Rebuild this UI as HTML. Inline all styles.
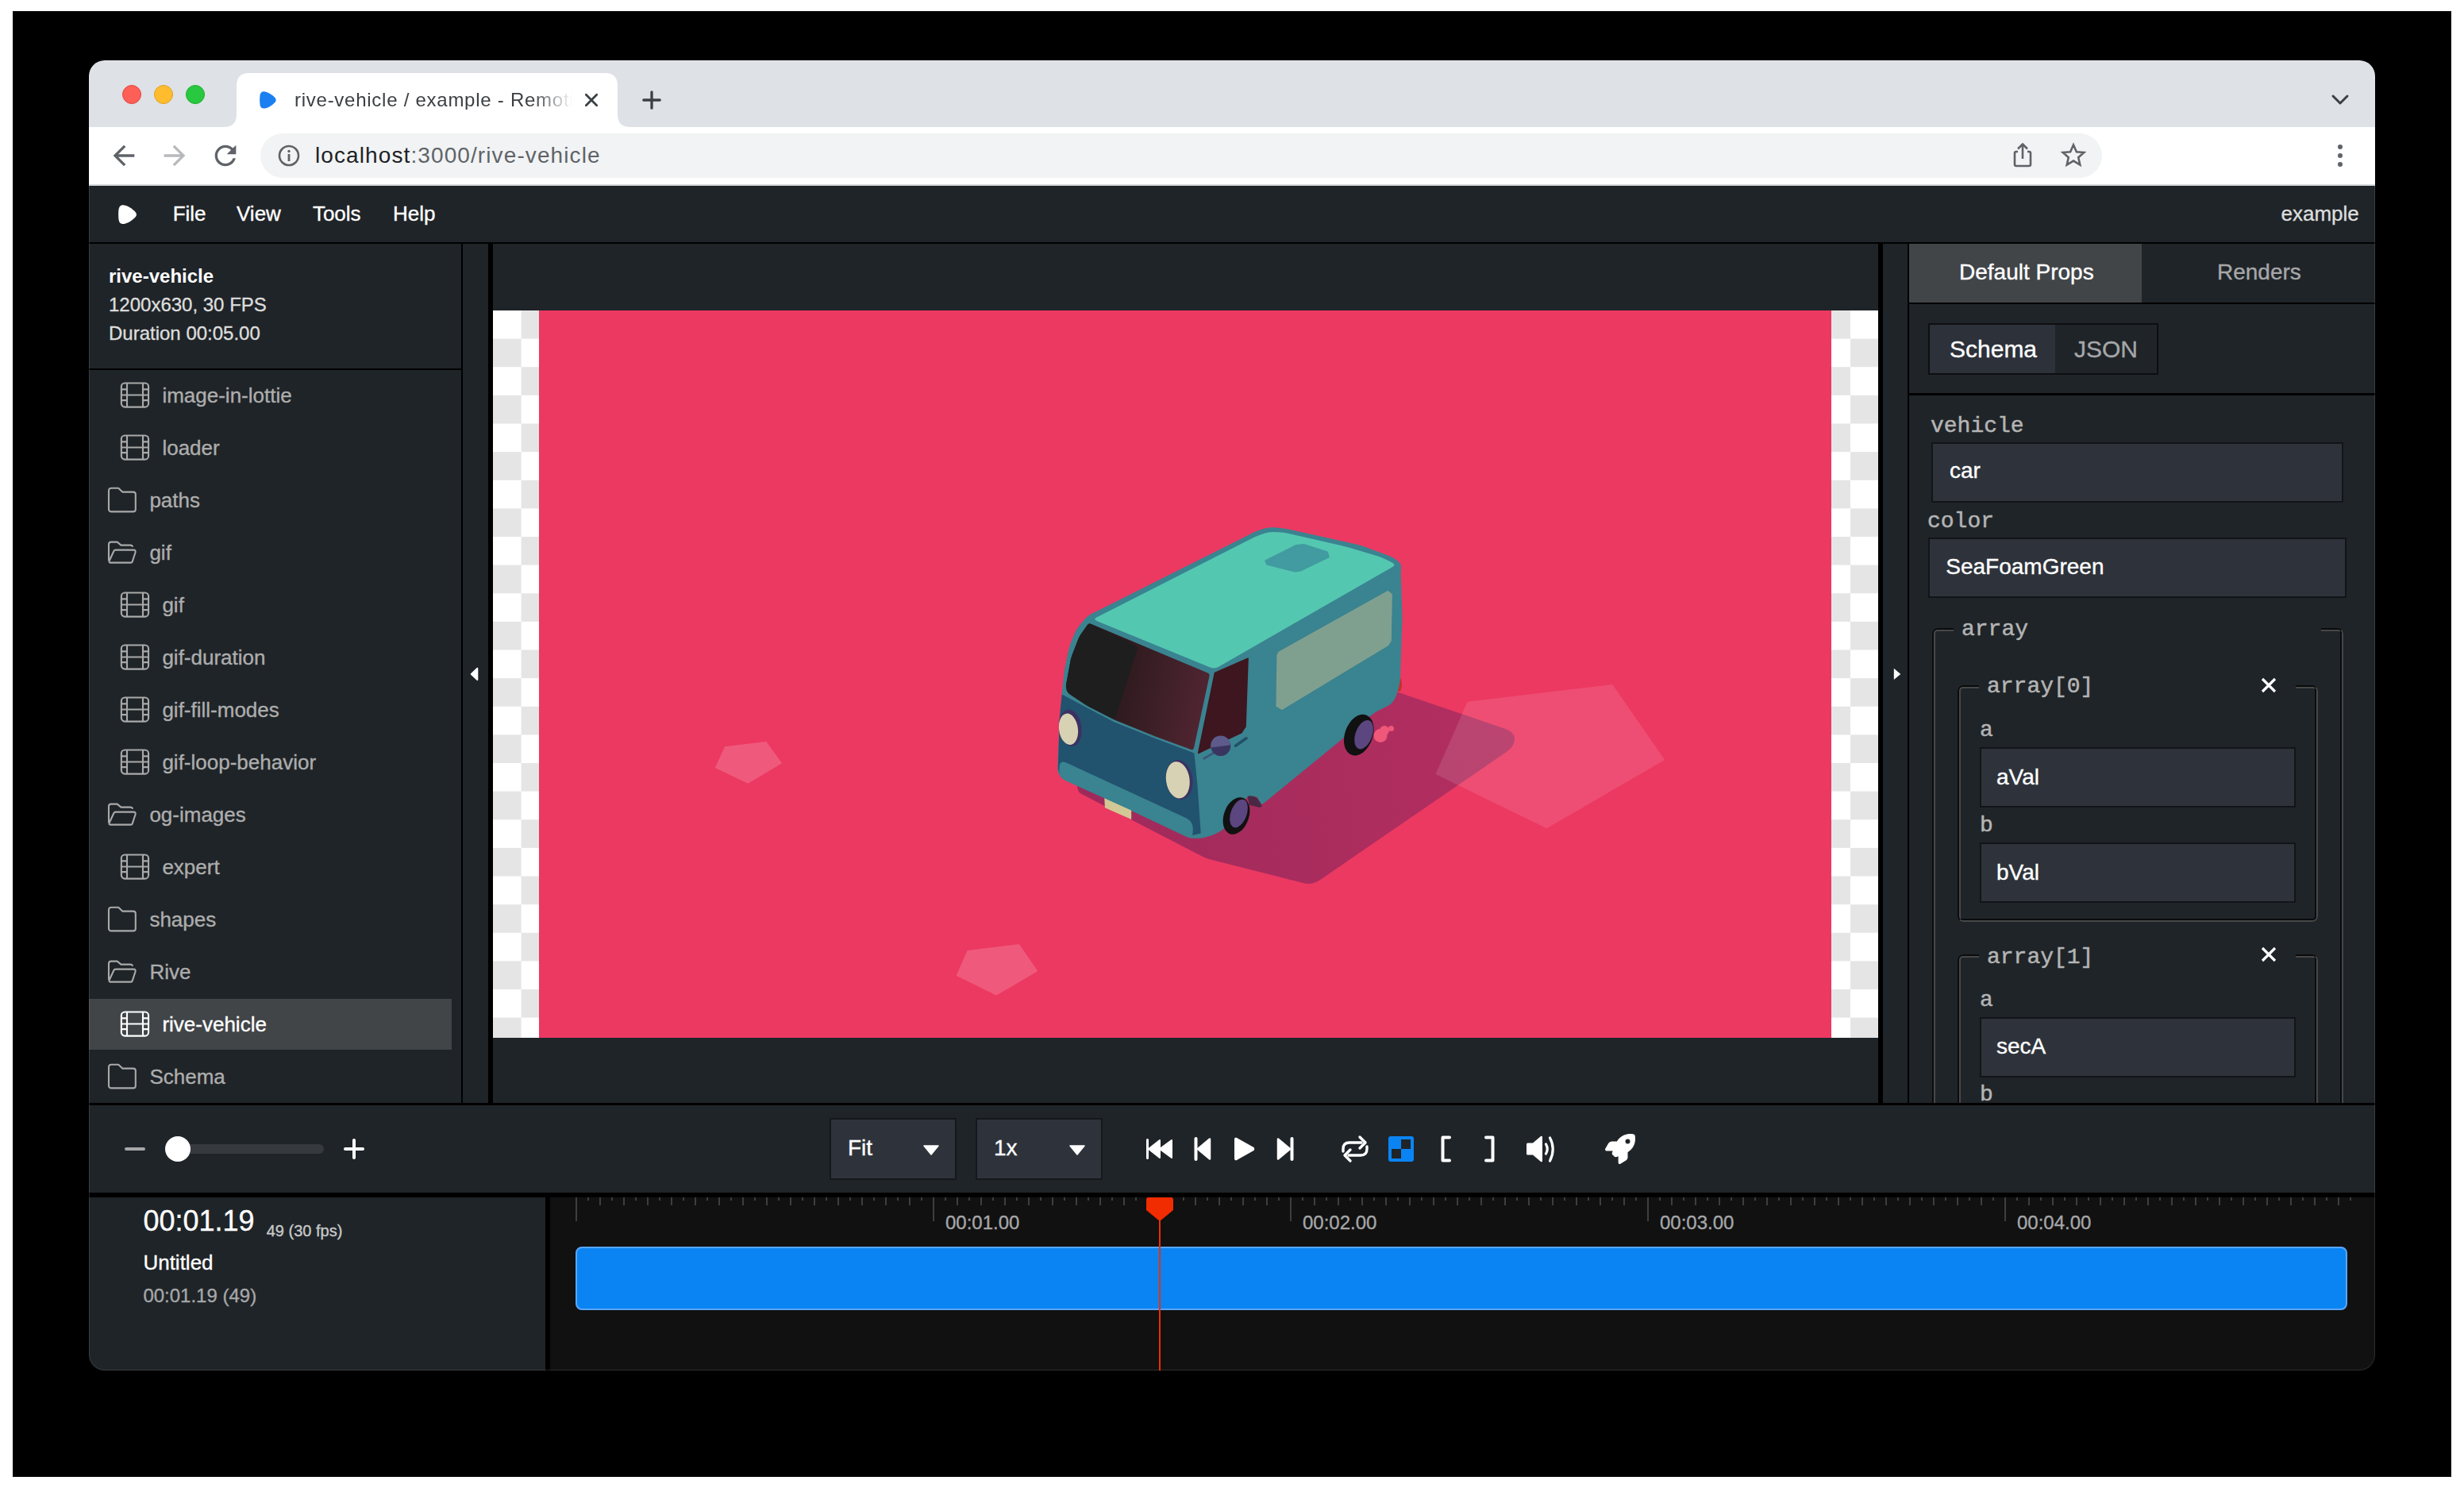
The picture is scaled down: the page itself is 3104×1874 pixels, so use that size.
<!DOCTYPE html>
<html><head><meta charset="utf-8">
<style>
*{box-sizing:border-box;margin:0;padding:0}
html,body{width:3104px;height:1874px;overflow:hidden;background:#fff}
body{position:relative;font-family:"Liberation Sans",sans-serif}
.a{position:absolute}
#frame{left:16px;top:14px;width:3072px;height:1846px;background:#000}
#win{left:0;top:0;width:3104px;height:1874px;clip-path:inset(76px 112px 148px 112px round 20px)}
.t{position:absolute;white-space:nowrap;line-height:1}
</style></head>
<body>
<div id="frame" class="a"></div>
<div id="win" class="a">
  <!-- tab strip -->
  <div class="a" style="left:112px;top:76px;width:2880px;height:84px;background:#dee1e6"></div>
  <!-- toolbar -->
  <div class="a" style="left:112px;top:160px;width:2880px;height:72px;background:#fff"></div>
  <div class="a" style="left:112px;top:232px;width:2880px;height:2px;background:#d7d9dc"></div>
  <!-- traffic lights -->
  <div class="a" style="left:154px;top:107px;width:24px;height:24px;border-radius:50%;background:#fe5f57;border:1px solid #e14640"></div>
  <div class="a" style="left:194px;top:107px;width:24px;height:24px;border-radius:50%;background:#febc2e;border:1px solid #dfa123"></div>
  <div class="a" style="left:234px;top:107px;width:24px;height:24px;border-radius:50%;background:#28c840;border:1px solid #1dad2b"></div>

  <!-- tab -->
  <svg class="a" style="left:282px;top:92px" width="512" height="68" viewBox="0 0 512 68"><path d="M0,68 Q16,68 16,52 L16,16 Q16,0 32,0 L480,0 Q496,0 496,16 L496,52 Q496,68 512,68 Z" fill="#fff"/></svg>
  <svg class="a" style="left:327.2px;top:114.9px" width="21.1" height="21.9" viewBox="0 0 24 24" preserveAspectRatio="none"><path d="M6,0.3 C11,0.3 18,4.5 22.5,9.3 C23.8,10.8 23.8,13.2 22.5,14.7 C18,19.5 11,23.7 6,23.7 C2.6,23.7 1,21.5 0.5,18 C0,14 0,10 0.5,6 C1,2.5 2.6,0.3 6,0.3 Z" fill="#1a7ff0"/></svg>
  <div class="t" id="tabtitle" style="left:371px;top:114px;font-size:24px;letter-spacing:0.74px;color:#3c4043;width:352px;overflow:hidden;-webkit-mask-image:linear-gradient(90deg,#000 300px,transparent 350px)">rive-vehicle / example - Remotion Studio</div>
  <svg class="a" style="left:733px;top:114px" width="24" height="24" viewBox="0 0 24 24"><path d="M5.3,5.3 L18.7,18.7 M18.7,5.3 L5.3,18.7" stroke="#3c4043" stroke-width="2.8" stroke-linecap="round"/></svg>
  <svg class="a" style="left:807px;top:112px" width="28" height="28" viewBox="0 0 28 28"><path d="M14,3.8 L14,24.2 M3.8,14 L24.2,14" stroke="#3c4043" stroke-width="3.3" stroke-linecap="round"/></svg>
  <svg class="a" style="left:2934px;top:116px" width="28" height="20" viewBox="0 0 28 20"><path d="M5,5 L14,14 L23,5" stroke="#3c4043" stroke-width="3" fill="none" stroke-linecap="round" stroke-linejoin="round"/></svg>
  <!-- nav icons -->
  <svg class="a" style="left:136px;top:176px" width="40" height="40" viewBox="0 0 24 24"><path d="M20 11H7.83l5.59-5.59L12 4l-8 8 8 8 1.41-1.41L7.83 13H20v-2z" fill="#5f6368"/></svg>
  <svg class="a" style="left:200px;top:176px" width="40" height="40" viewBox="0 0 24 24"><path d="M4 11h12.17l-5.59-5.59L12 4l8 8-8 8-1.41-1.41L16.17 13H4v-2z" fill="#b7b9bc"/></svg>
  <svg class="a" style="left:264px;top:176px" width="40" height="40" viewBox="0 0 24 24"><path d="M17.65 6.35C16.2 4.9 14.21 4 12 4c-4.42 0-7.99 3.58-7.99 8s3.57 8 7.99 8c3.73 0 6.84-2.55 7.73-6h-2.08c-.82 2.33-3.04 4-5.65 4-3.31 0-6-2.69-6-6s2.69-6 6-6c1.66 0 3.14.69 4.22 1.78L13 11h7V4l-2.35 2.35z" fill="#5f6368"/></svg>
  <!-- address bar -->
  <div class="a" style="left:328px;top:168px;width:2320px;height:56px;border-radius:28px;background:#f1f3f4"></div>
  <svg class="a" style="left:348px;top:180px" width="32" height="32" viewBox="0 0 32 32"><circle cx="16" cy="16" r="12" fill="none" stroke="#5f6368" stroke-width="2.6"/><rect x="14.6" y="14" width="2.8" height="9" fill="#5f6368"/><circle cx="16" cy="10.5" r="1.7" fill="#5f6368"/></svg>
  <div class="t" id="url" style="left:397px;top:182px;font-size:28px;letter-spacing:1.1px;color:#202124">localhost<span style="color:#5f6368">:3000/rive-vehicle</span></div>
  <svg class="a" style="left:2530px;top:178px" width="36" height="36" viewBox="0 0 36 36"><path d="M12,13 L10,13 Q8,13 8,15 L8,29 Q8,31 10,31 L26,31 Q28,31 28,29 L28,15 Q28,13 26,13 L24,13" fill="none" stroke="#5f6368" stroke-width="2.6"/><path d="M18,22 L18,4 M12,9.5 L18,3.5 L24,9.5" fill="none" stroke="#5f6368" stroke-width="2.6" stroke-linejoin="round"/></svg>
  <svg class="a" style="left:2594px;top:178px" width="36" height="36" viewBox="0 0 36 36"><path d="M18,4.5 L21.9,13.2 L31.3,14 L24.2,20.3 L26.3,29.6 L18,24.6 L9.7,29.6 L11.8,20.3 L4.7,14 L14.1,13.2 Z" fill="none" stroke="#5f6368" stroke-width="2.6" stroke-linejoin="miter"/></svg>
  <svg class="a" style="left:2932px;top:176px" width="32" height="40" viewBox="0 0 32 40"><circle cx="16" cy="9" r="3" fill="#5f6368"/><circle cx="16" cy="20" r="3" fill="#5f6368"/><circle cx="16" cy="31" r="3" fill="#5f6368"/></svg>


<div class="a" style="left:112px;top:234px;width:2880px;height:1492px;background:#1f2428;"></div>
<div class="a" style="left:112px;top:305px;width:2880px;height:2px;background:#000;"></div>
<svg class="a" style="left:148.9px;top:257.8px" width="23.4" height="24.3" viewBox="0 0 24 24" preserveAspectRatio="none"><path d="M6,0.3 C11,0.3 18,4.5 22.5,9.3 C23.8,10.8 23.8,13.2 22.5,14.7 C18,19.5 11,23.7 6,23.7 C2.6,23.7 1,21.5 0.5,18 C0,14 0,10 0.5,6 C1,2.5 2.6,0.3 6,0.3 Z" fill="#fff"/></svg>
<div class="t" style="left:217.7px;top:256.09px;font-size:26px;color:#fff;font-weight:400;font-family:'Liberation Sans',sans-serif;-webkit-text-stroke:0.35px #fff;">File</div>
<div class="t" style="left:298px;top:256.09px;font-size:26px;color:#fff;font-weight:400;font-family:'Liberation Sans',sans-serif;-webkit-text-stroke:0.35px #fff;">View</div>
<div class="t" style="left:393.9px;top:256.09px;font-size:26px;color:#fff;font-weight:400;font-family:'Liberation Sans',sans-serif;-webkit-text-stroke:0.35px #fff;">Tools</div>
<div class="t" style="left:495px;top:256.09px;font-size:26px;color:#fff;font-weight:400;font-family:'Liberation Sans',sans-serif;-webkit-text-stroke:0.35px #fff;">Help</div>
<div class="t" style="left:2873.5px;top:256.09px;font-size:26px;color:#ddd;font-weight:400;font-family:'Liberation Sans',sans-serif;-webkit-text-stroke:0.35px #ddd;">example</div>
<div class="a" style="left:581px;top:307px;width:2px;height:1082px;background:#000;"></div>
<div class="a" style="left:615px;top:307px;width:6px;height:1082px;background:#000;"></div>
<div class="a" style="left:2366px;top:307px;width:6px;height:1082px;background:#000;"></div>
<div class="a" style="left:2403px;top:307px;width:2px;height:1082px;background:#000;"></div>
<div class="t" style="left:137px;top:336.38px;font-size:24px;color:#fff;font-weight:700;font-family:'Liberation Sans',sans-serif;">rive-vehicle</div>
<div class="t" style="left:137px;top:372.08px;font-size:24px;color:#ddd;font-weight:400;font-family:'Liberation Sans',sans-serif;-webkit-text-stroke:0.35px #ddd;">1200x630, 30 FPS</div>
<div class="t" style="left:137px;top:408.28px;font-size:24px;color:#ddd;font-weight:400;font-family:'Liberation Sans',sans-serif;-webkit-text-stroke:0.35px #ddd;">Duration 00:05.00</div>
<div class="a" style="left:112px;top:464px;width:469px;height:2px;background:#000;"></div>
<svg class="a" style="left:151px;top:480.4px" width="40" height="36" viewBox="0 0 40 36"><g fill="none" stroke="#a9a9a9" stroke-width="2.1"><rect x="1.85" y="2.45" width="34.2" height="30.2" rx="4.4"/><path d="M9,2.45 V32.65 M29,2.45 V32.65 M1.85,10.4 H9 M1.85,17.5 H36.05 M1.85,24.1 H9 M29,10.4 H36.05 M29,24.1 H36.05"/></g></svg>
<div class="t" style="left:204.4px;top:485.39px;font-size:26px;color:#adadad;font-weight:400;font-family:'Liberation Sans',sans-serif;-webkit-text-stroke:0.35px #adadad;">image-in-lottie</div>
<svg class="a" style="left:151px;top:546.4px" width="40" height="36" viewBox="0 0 40 36"><g fill="none" stroke="#a9a9a9" stroke-width="2.1"><rect x="1.85" y="2.45" width="34.2" height="30.2" rx="4.4"/><path d="M9,2.45 V32.65 M29,2.45 V32.65 M1.85,10.4 H9 M1.85,17.5 H36.05 M1.85,24.1 H9 M29,10.4 H36.05 M29,24.1 H36.05"/></g></svg>
<div class="t" style="left:204.4px;top:551.39px;font-size:26px;color:#adadad;font-weight:400;font-family:'Liberation Sans',sans-serif;-webkit-text-stroke:0.35px #adadad;">loader</div>
<svg class="a" style="left:135px;top:612.4px" width="40" height="36" viewBox="0 0 40 36"><path d="M2,6.2 Q2,2.7 5.5,2.7 H14.2 L19.2,7.6 H32.8 Q35.8,7.6 35.8,10.6 V29.4 Q35.8,32.4 32.8,32.4 H5.5 Q2,32.4 2,28.9 Z" fill="none" stroke="#a9a9a9" stroke-width="2.1" stroke-linejoin="round"/></svg>
<div class="t" style="left:188.4px;top:617.39px;font-size:26px;color:#adadad;font-weight:400;font-family:'Liberation Sans',sans-serif;-webkit-text-stroke:0.35px #adadad;">paths</div>
<svg class="a" style="left:135px;top:678.4px" width="40" height="36" viewBox="0 0 40 36"><path d="M2,28 V7.6 Q2,4.6 5,4.6 H12.7 L17.5,8.6 H29.3 Q31.5,8.6 32.2,10.8 M3.8,30.6 H30 Q31.3,30.6 31.7,29.4 L35.6,17.5 Q36,14.6 33.5,14.6 H10.6 Q9,14.6 8.4,16 L2.6,28.5 Q2.2,30.6 3.8,30.6 Z" fill="none" stroke="#a9a9a9" stroke-width="2.1" stroke-linejoin="round"/></svg>
<div class="t" style="left:188.4px;top:683.39px;font-size:26px;color:#adadad;font-weight:400;font-family:'Liberation Sans',sans-serif;-webkit-text-stroke:0.35px #adadad;">gif</div>
<svg class="a" style="left:151px;top:744.4px" width="40" height="36" viewBox="0 0 40 36"><g fill="none" stroke="#a9a9a9" stroke-width="2.1"><rect x="1.85" y="2.45" width="34.2" height="30.2" rx="4.4"/><path d="M9,2.45 V32.65 M29,2.45 V32.65 M1.85,10.4 H9 M1.85,17.5 H36.05 M1.85,24.1 H9 M29,10.4 H36.05 M29,24.1 H36.05"/></g></svg>
<div class="t" style="left:204.4px;top:749.39px;font-size:26px;color:#adadad;font-weight:400;font-family:'Liberation Sans',sans-serif;-webkit-text-stroke:0.35px #adadad;">gif</div>
<svg class="a" style="left:151px;top:810.4px" width="40" height="36" viewBox="0 0 40 36"><g fill="none" stroke="#a9a9a9" stroke-width="2.1"><rect x="1.85" y="2.45" width="34.2" height="30.2" rx="4.4"/><path d="M9,2.45 V32.65 M29,2.45 V32.65 M1.85,10.4 H9 M1.85,17.5 H36.05 M1.85,24.1 H9 M29,10.4 H36.05 M29,24.1 H36.05"/></g></svg>
<div class="t" style="left:204.4px;top:815.39px;font-size:26px;color:#adadad;font-weight:400;font-family:'Liberation Sans',sans-serif;-webkit-text-stroke:0.35px #adadad;">gif-duration</div>
<svg class="a" style="left:151px;top:876.4px" width="40" height="36" viewBox="0 0 40 36"><g fill="none" stroke="#a9a9a9" stroke-width="2.1"><rect x="1.85" y="2.45" width="34.2" height="30.2" rx="4.4"/><path d="M9,2.45 V32.65 M29,2.45 V32.65 M1.85,10.4 H9 M1.85,17.5 H36.05 M1.85,24.1 H9 M29,10.4 H36.05 M29,24.1 H36.05"/></g></svg>
<div class="t" style="left:204.4px;top:881.39px;font-size:26px;color:#adadad;font-weight:400;font-family:'Liberation Sans',sans-serif;-webkit-text-stroke:0.35px #adadad;">gif-fill-modes</div>
<svg class="a" style="left:151px;top:942.4px" width="40" height="36" viewBox="0 0 40 36"><g fill="none" stroke="#a9a9a9" stroke-width="2.1"><rect x="1.85" y="2.45" width="34.2" height="30.2" rx="4.4"/><path d="M9,2.45 V32.65 M29,2.45 V32.65 M1.85,10.4 H9 M1.85,17.5 H36.05 M1.85,24.1 H9 M29,10.4 H36.05 M29,24.1 H36.05"/></g></svg>
<div class="t" style="left:204.4px;top:947.39px;font-size:26px;color:#adadad;font-weight:400;font-family:'Liberation Sans',sans-serif;-webkit-text-stroke:0.35px #adadad;">gif-loop-behavior</div>
<svg class="a" style="left:135px;top:1008.4px" width="40" height="36" viewBox="0 0 40 36"><path d="M2,28 V7.6 Q2,4.6 5,4.6 H12.7 L17.5,8.6 H29.3 Q31.5,8.6 32.2,10.8 M3.8,30.6 H30 Q31.3,30.6 31.7,29.4 L35.6,17.5 Q36,14.6 33.5,14.6 H10.6 Q9,14.6 8.4,16 L2.6,28.5 Q2.2,30.6 3.8,30.6 Z" fill="none" stroke="#a9a9a9" stroke-width="2.1" stroke-linejoin="round"/></svg>
<div class="t" style="left:188.4px;top:1013.39px;font-size:26px;color:#adadad;font-weight:400;font-family:'Liberation Sans',sans-serif;-webkit-text-stroke:0.35px #adadad;">og-images</div>
<svg class="a" style="left:151px;top:1074.4px" width="40" height="36" viewBox="0 0 40 36"><g fill="none" stroke="#a9a9a9" stroke-width="2.1"><rect x="1.85" y="2.45" width="34.2" height="30.2" rx="4.4"/><path d="M9,2.45 V32.65 M29,2.45 V32.65 M1.85,10.4 H9 M1.85,17.5 H36.05 M1.85,24.1 H9 M29,10.4 H36.05 M29,24.1 H36.05"/></g></svg>
<div class="t" style="left:204.4px;top:1079.39px;font-size:26px;color:#adadad;font-weight:400;font-family:'Liberation Sans',sans-serif;-webkit-text-stroke:0.35px #adadad;">expert</div>
<svg class="a" style="left:135px;top:1140.4px" width="40" height="36" viewBox="0 0 40 36"><path d="M2,6.2 Q2,2.7 5.5,2.7 H14.2 L19.2,7.6 H32.8 Q35.8,7.6 35.8,10.6 V29.4 Q35.8,32.4 32.8,32.4 H5.5 Q2,32.4 2,28.9 Z" fill="none" stroke="#a9a9a9" stroke-width="2.1" stroke-linejoin="round"/></svg>
<div class="t" style="left:188.4px;top:1145.39px;font-size:26px;color:#adadad;font-weight:400;font-family:'Liberation Sans',sans-serif;-webkit-text-stroke:0.35px #adadad;">shapes</div>
<svg class="a" style="left:135px;top:1206.4px" width="40" height="36" viewBox="0 0 40 36"><path d="M2,28 V7.6 Q2,4.6 5,4.6 H12.7 L17.5,8.6 H29.3 Q31.5,8.6 32.2,10.8 M3.8,30.6 H30 Q31.3,30.6 31.7,29.4 L35.6,17.5 Q36,14.6 33.5,14.6 H10.6 Q9,14.6 8.4,16 L2.6,28.5 Q2.2,30.6 3.8,30.6 Z" fill="none" stroke="#a9a9a9" stroke-width="2.1" stroke-linejoin="round"/></svg>
<div class="t" style="left:188.4px;top:1211.39px;font-size:26px;color:#adadad;font-weight:400;font-family:'Liberation Sans',sans-serif;-webkit-text-stroke:0.35px #adadad;">Rive</div>
<div class="a" style="left:112px;top:1258.0px;width:457px;height:64px;background:#414548;"></div>
<svg class="a" style="left:151px;top:1272.4px" width="40" height="36" viewBox="0 0 40 36"><g fill="none" stroke="#fff" stroke-width="2.1"><rect x="1.85" y="2.45" width="34.2" height="30.2" rx="4.4"/><path d="M9,2.45 V32.65 M29,2.45 V32.65 M1.85,10.4 H9 M1.85,17.5 H36.05 M1.85,24.1 H9 M29,10.4 H36.05 M29,24.1 H36.05"/></g></svg>
<div class="t" style="left:204.4px;top:1277.39px;font-size:26px;color:#fff;font-weight:400;font-family:'Liberation Sans',sans-serif;-webkit-text-stroke:0.35px #fff;">rive-vehicle</div>
<svg class="a" style="left:135px;top:1338.4px" width="40" height="36" viewBox="0 0 40 36"><path d="M2,6.2 Q2,2.7 5.5,2.7 H14.2 L19.2,7.6 H32.8 Q35.8,7.6 35.8,10.6 V29.4 Q35.8,32.4 32.8,32.4 H5.5 Q2,32.4 2,28.9 Z" fill="none" stroke="#a9a9a9" stroke-width="2.1" stroke-linejoin="round"/></svg>
<div class="t" style="left:188.4px;top:1343.39px;font-size:26px;color:#adadad;font-weight:400;font-family:'Liberation Sans',sans-serif;-webkit-text-stroke:0.35px #adadad;">Schema</div>
<div class="a" style="left:621px;top:391px;width:1745px;height:916px;background:conic-gradient(#e5e5e5 0 25%,#fff 0 50%,#e5e5e5 0 75%,#fff 0) 0 0/71.26px 71.26px"></div>
<div class="a" style="left:678.5px;top:391px;width:1628.8px;height:916px;background:#ec3962;"></div>
<svg class="a" style="left:0;top:0" width="3104" height="1874" viewBox="0 0 3104 1874">
<defs><linearGradient id="shg" x1="1360" y1="1000" x2="1910" y2="930" gradientUnits="userSpaceOnUse"><stop offset="0" stop-color="#9e2a5b"/><stop offset="1" stop-color="#b42f60"/></linearGradient><linearGradient id="wsg" x1="1410" y1="880" x2="1520" y2="900" gradientUnits="userSpaceOnUse"><stop offset="0" stop-color="#2f1b1f"/><stop offset="1" stop-color="#512532"/></linearGradient><clipPath id="redclip"><rect x="678.5" y="391" width="1628.8" height="916"/></clipPath></defs>
<g clip-path="url(#redclip)">
<polygon points="913.1,940.3 965.2,934.0 985.1,961.3 942.2,986.8 900.8,966.9" fill="rgba(255,255,255,0.17)" />
<polygon points="1218.7,1196.9 1283.8,1189.0 1307.3,1223.0 1255.2,1253.6 1204.6,1228.8" fill="rgba(255,255,255,0.17)" />
<path d="M1760.2,871.4 L1896.6,918.1 Q1908.0,922.0 1908.0,931.0 L1908.0,931.0 Q1908.0,940.0 1898.1,946.8 L1662.9,1108.2 Q1653.0,1115.0 1641.4,1112.0 L1523.3,1082.0 Q1519.4,1081.0 1515.8,1079.2 L1362.1,999.8 Q1358.5,998.0 1357.7,994.1 L1356.6,987.9 Q1356.0,985.0 1357.4,982.3 L1398.6,902.7 Q1400.0,900.0 1403.0,899.5 L1697.0,850.5 Q1700.0,850.0 1702.8,851.0 L1754.6,869.4 Q1757.4,870.4 1760.2,871.4 Z" fill="url(#shg)" />
<polygon points="1848.7,883.8 2031.3,861.9 2097.1,956.9 1948.5,1043.3 1808.5,975.1" fill="rgba(255,255,255,0.11)" />
<ellipse cx="1762.5" cy="862" rx="3.5" ry="9" fill="#c4302c"/>
<path d="M1374.6,773.3 L1580.3,670.0 Q1585.7,667.3 1591.5,665.9 L1594.4,665.2 Q1600.3,663.7 1606.2,664.3 L1612.6,664.9 Q1618.5,665.5 1624.4,666.8 L1707.6,685.2 Q1713.5,686.5 1719.1,688.6 L1749.9,700.0 Q1755.5,702.0 1760.1,705.8 L1760.9,706.5 Q1765.5,710.3 1765.1,714.8 L1765.1,714.8 Q1764.6,719.4 1764.8,725.4 L1766.3,771.8 Q1766.4,777.8 1766.3,783.8 L1763.9,854.0 Q1763.7,860.0 1762.1,865.8 L1760.8,870.7 Q1759.1,876.4 1756.4,881.4 L1756.4,881.4 Q1753.7,886.3 1748.4,888.9 L1737.2,894.5 Q1731.8,897.2 1727.2,901.0 L1592.8,1011.0 Q1588.2,1014.8 1586.5,1009.1 L1586.2,1008.4 Q1584.5,1002.6 1578.5,1003.0 L1575.9,1003.2 Q1569.9,1003.6 1566.5,1008.5 L1544.3,1040.5 Q1540.8,1045.4 1535.5,1048.1 L1533.7,1049.0 Q1528.3,1051.7 1522.6,1053.3 L1519.5,1054.2 Q1513.8,1055.8 1508.5,1055.8 L1508.5,1055.8 Q1503.3,1055.8 1500.7,1055.6 L1500.7,1055.6 Q1498.1,1055.4 1492.7,1052.9 L1342.1,981.7 Q1336.7,979.2 1334.4,975.8 L1334.4,975.8 Q1332.1,972.5 1332.3,966.5 L1332.7,953.5 Q1332.9,947.5 1333.3,941.5 L1337.3,878.5 Q1337.7,872.5 1338.3,866.5 L1340.2,849.3 Q1340.8,843.3 1342.1,837.5 L1345.8,820.0 Q1347.1,814.2 1349.3,808.6 L1353.2,798.9 Q1355.4,793.3 1359.2,788.6 L1365.5,780.7 Q1369.3,776.0 1374.6,773.3 Z" fill="#3a8390" />
<polygon points="1337.7,874.6 1370.0,891.7 1403.3,909.2 1453.3,929.2 1504.4,948.5 1508.5,989.2 1512.7,1049.6 1503.3,1051.7 1336.7,978.8 1332.9,968.3 1334.6,905.8" fill="#21526e" />
<path d="M1381.9,777.3 L1576.7,678.3 Q1582.0,675.6 1587.7,673.6 L1592.8,671.7 Q1598.4,669.7 1604.4,670.0 L1610.7,670.2 Q1616.7,670.5 1622.6,671.8 L1689.4,687.0 Q1695.2,688.3 1701.0,690.1 L1735.1,700.3 Q1740.9,702.0 1746.3,704.7 L1753.8,708.5 Q1759.1,711.2 1753.9,714.2 L1535.2,839.7 Q1530.0,842.7 1524.4,840.4 L1382.1,782.3 Q1376.6,780.0 1381.9,777.3 Z" fill="#54c7b0" />
<path d="M1594.8,706.6 L1633.1,687.4 L1642.3,686.5 L1671.5,695.7 L1673.3,701.1 L1638.6,717.9 L1631.3,719.0 L1596.6,710.3 Z" fill="#419ba0" stroke="#419ba0" stroke-width="3" stroke-linejoin="round"/>
<path d="M1611.2,821.7 L1748.2,745.0 L1752.8,748.6 L1751.8,807.0 L1748.2,812.5 L1614.9,892.9 L1608.5,889.2 L1609.4,825.3 Z" fill="#80a08f" stroke="#80a08f" stroke-width="2" stroke-linejoin="round"/>
<path d="M1374.4,785.7 L1521.4,847.4 Q1524.2,848.5 1523.5,851.5 L1504.0,942.1 Q1503.3,945.0 1500.5,944.0 L1456.1,927.7 Q1453.3,926.7 1450.6,925.5 L1406.1,907.4 Q1403.3,906.2 1400.7,904.9 L1372.7,890.5 Q1370.0,889.2 1367.5,887.5 L1347.5,874.2 Q1345.0,872.5 1344.0,869.7 L1343.5,868.0 Q1342.5,865.2 1343.0,862.3 L1348.6,831.7 Q1349.2,828.8 1350.2,825.9 L1358.5,804.5 Q1359.6,801.7 1361.3,799.2 L1369.9,787.0 Q1371.7,784.6 1374.4,785.7 Z" fill="url(#wsg)" />
<path d="M1374.4,785.9 L1430.8,813.3 Q1433.5,814.6 1432.6,817.4 L1405.3,903.4 Q1404.4,906.2 1401.7,904.9 L1372.7,890.5 Q1370.0,889.2 1367.5,887.5 L1347.5,874.2 Q1345.0,872.5 1344.0,869.7 L1343.5,868.0 Q1342.5,865.2 1343.0,862.3 L1348.6,831.7 Q1349.2,828.8 1350.2,825.9 L1358.5,804.5 Q1359.6,801.7 1361.3,799.2 L1369.9,787.0 Q1371.7,784.6 1374.4,785.9 Z" fill="#1e1e1e" />
<path d="M1530.4,847.5 L1572.1,829.2 L1569.0,915.2 L1563.8,922.9 L1509.6,948.5 Z" fill="#3e1620" stroke="#3e1620" stroke-width="1.5" stroke-linejoin="round"/>
<polygon points="1390.8,995.4 1425.2,1012.1 1425.2,1031.9 1391.9,1017.3" fill="#d2c895" />
<path d="M1343.2,960.6 L1494.3,1030.2 Q1502.5,1034.0 1502.7,1043.0 L1502.7,1046.8 Q1502.9,1055.8 1494.7,1052.1 L1341.9,982.9 Q1333.8,979.2 1334.3,970.2 L1334.5,965.9 Q1335.0,956.9 1343.2,960.6 Z" fill="#3a8390" />
<ellipse cx="1348.3" cy="916.7" rx="14.2" ry="23.3" fill="#3b3262" transform="rotate(-8 1348.3 916.7)"/>
<ellipse cx="1346" cy="918.3" rx="11.9" ry="19.8" fill="#d8d2b4" transform="rotate(-8 1346 918.3)"/>
<ellipse cx="1485.6" cy="981.9" rx="16.7" ry="25" fill="#3b3262" transform="rotate(-8 1485.6 981.9)"/>
<ellipse cx="1483.75" cy="982.3" rx="14.8" ry="23.3" fill="#d8d2b4" transform="rotate(-8 1483.75 982.3)"/>
<line x1="1515.8" y1="955.8" x2="1530" y2="947.5" stroke="#3a5478" stroke-width="2.5"/>
<circle cx="1537.7" cy="939.6" r="12.5" fill="#3a3560"/>
<path d="M1525.4,941.5 A12.5,12.5 0 0 1 1549.9,936.5 L1549,938.5 Q1537,940 1525.4,941.5 Z" fill="#5e5a8c"/>
<line x1="1556.5" y1="939.2" x2="1570" y2="929.8" stroke="#22506a" stroke-width="3.5" stroke-linecap="round"/>
<path d="M1571.4,1003 Q1577.5,1001 1583.5,1005 Q1587,1009 1590,1015.7 L1586.5,1017 Q1580,1015 1574,1014 Z" fill="#4a2845"/>
<ellipse cx="1557.5" cy="1027.5" rx="15.7" ry="24.1" fill="#111" transform="rotate(20 1557.5 1027.5)"/>
<ellipse cx="1560.5" cy="1024.5" rx="10" ry="18.5" fill="#5b4680" transform="rotate(20 1560.5 1024.5)"/>
<ellipse cx="1711.8" cy="925.6" rx="17.5" ry="26.8" fill="#111" transform="rotate(20 1711.8 925.6)"/>
<ellipse cx="1718.1" cy="925.2" rx="10.5" ry="19" fill="#5b4680" transform="rotate(20 1718.1 925.2)"/>
<circle cx="1739" cy="926.4" r="8.5" fill="#f0587a"/><circle cx="1744" cy="920" r="6" fill="#f0587a"/><circle cx="1752.5" cy="917.4" r="3.5" fill="#f0587a"/>
</g></svg>
<svg class="a" style="left:590px;top:838px" width="16" height="22" viewBox="0 0 16 22"><path d="M11.3,3.8 L3.8,11 L11.3,18.1 Z" fill="#fff" stroke="#fff" stroke-width="2" stroke-linejoin="round"/></svg>
<svg class="a" style="left:2380px;top:838px" width="18" height="22" viewBox="0 0 18 22"><path d="M5.8,3.8 L14.3,11 L5.8,18.1 Z" fill="#fff"/></svg>
<div class="a" style="left:2405px;top:307px;width:293px;height:74px;background:#414548;"></div>
<div class="t" style="left:2468px;top:329.30px;font-size:28px;color:#fff;font-weight:400;font-family:'Liberation Sans',sans-serif;-webkit-text-stroke:0.35px #fff;">Default Props</div>
<div class="t" style="left:2793px;top:329.30px;font-size:28px;color:#a6a7a9;font-weight:400;font-family:'Liberation Sans',sans-serif;-webkit-text-stroke:0.35px #a6a7a9;">Renders</div>
<div class="a" style="left:2405px;top:381px;width:587px;height:2px;background:#000;"></div>
<div class="a" style="left:2429px;top:407px;width:290px;height:65px;border:2px solid #0d0f11;background:#1f2428"></div>
<div class="a" style="left:2431px;top:409px;width:158px;height:61px;background:#2c313a;"></div>
<div class="t" style="left:2456px;top:424.61px;font-size:30px;color:#fff;font-weight:400;font-family:'Liberation Sans',sans-serif;-webkit-text-stroke:0.35px #fff;">Schema</div>
<div class="t" style="left:2613px;top:424.61px;font-size:30px;color:#a6a7a9;font-weight:400;font-family:'Liberation Sans',sans-serif;-webkit-text-stroke:0.35px #a6a7a9;">JSON</div>
<div class="a" style="left:2405px;top:495px;width:587px;height:3px;background:#000;"></div>
<div class="t" style="left:2432px;top:522.54px;font-size:28px;color:#b4b4b4;font-weight:400;font-family:'Liberation Mono',monospace;-webkit-text-stroke:0.5px #b4b4b4;">vehicle</div>
<div class="a" style="left:2433px;top:557px;width:519px;height:76px;border:2px solid #121518;background:#2e333b"></div>
<div class="t" style="left:2456px;top:578.90px;font-size:28px;color:#fff;font-weight:400;font-family:'Liberation Sans',sans-serif;-webkit-text-stroke:0.35px #fff;">car</div>
<div class="t" style="left:2428px;top:642.94px;font-size:28px;color:#b4b4b4;font-weight:400;font-family:'Liberation Mono',monospace;-webkit-text-stroke:0.5px #b4b4b4;">color</div>
<div class="a" style="left:2429px;top:677px;width:527px;height:76px;border:2px solid #121518;background:#2e333b"></div>
<div class="t" style="left:2451.3px;top:700.20px;font-size:28px;color:#fff;font-weight:400;font-family:'Liberation Sans',sans-serif;-webkit-text-stroke:0.35px #fff;">SeaFoamGreen</div>
<div class="a" style="left:2434px;top:791px;width:518px;height:709px;border:2px solid;border-color:#0a0c0e #474747 #474747 #0a0c0e;border-radius:7px;-webkit-mask:linear-gradient(#000,#000) 0 5px/100% 100% no-repeat,linear-gradient(90deg,#000 27px,transparent 27px,transparent 490px,#000 490px) 0 0/100% 5px no-repeat"><div style="position:absolute;inset:0;border:2px solid;border-color:#474747 #0a0c0e #0a0c0e #474747;border-radius:5px"></div></div>
<div class="t" style="left:2471px;top:779.04px;font-size:28px;color:#b4b4b4;font-weight:400;font-family:'Liberation Mono',monospace;-webkit-text-stroke:0.5px #b4b4b4;">array</div>
<div class="a" style="left:2466px;top:863px;width:454px;height:298px;border:2px solid;border-color:#0a0c0e #474747 #474747 #0a0c0e;border-radius:7px;-webkit-mask:linear-gradient(#000,#000) 0 5px/100% 100% no-repeat,linear-gradient(90deg,#000 27px,transparent 27px,transparent 426px,#000 426px) 0 0/100% 5px no-repeat"><div style="position:absolute;inset:0;border:2px solid;border-color:#474747 #0a0c0e #0a0c0e #474747;border-radius:5px"></div></div>
<div class="t" style="left:2503px;top:850.54px;font-size:28px;color:#b4b4b4;font-weight:400;font-family:'Liberation Mono',monospace;-webkit-text-stroke:0.5px #b4b4b4;">array[0]</div>
<div class="a" style="left:2466px;top:1202px;width:454px;height:298px;border:2px solid;border-color:#0a0c0e #474747 #474747 #0a0c0e;border-radius:7px;-webkit-mask:linear-gradient(#000,#000) 0 5px/100% 100% no-repeat,linear-gradient(90deg,#000 27px,transparent 27px,transparent 426px,#000 426px) 0 0/100% 5px no-repeat"><div style="position:absolute;inset:0;border:2px solid;border-color:#474747 #0a0c0e #0a0c0e #474747;border-radius:5px"></div></div>
<div class="t" style="left:2503px;top:1192.24px;font-size:28px;color:#b4b4b4;font-weight:400;font-family:'Liberation Mono',monospace;-webkit-text-stroke:0.5px #b4b4b4;">array[1]</div>
<svg class="a" style="left:2845px;top:850px" width="26" height="26" viewBox="0 0 26 26"><path d="M5,5 L21,21 M21,5 L5,21" stroke="#fff" stroke-width="3.2" stroke-linecap="butt"/></svg>
<svg class="a" style="left:2845px;top:1189px" width="26" height="26" viewBox="0 0 26 26"><path d="M5,5 L21,21 M21,5 L5,21" stroke="#fff" stroke-width="3.2" stroke-linecap="butt"/></svg>
<div class="t" style="left:2494px;top:905.74px;font-size:28px;color:#b4b4b4;font-weight:400;font-family:'Liberation Mono',monospace;-webkit-text-stroke:0.5px #b4b4b4;">a</div>
<div class="a" style="left:2494px;top:941px;width:398px;height:76px;border:2px solid #121518;background:#2e333b"></div>
<div class="t" style="left:2515px;top:964.60px;font-size:28px;color:#fff;font-weight:400;font-family:'Liberation Sans',sans-serif;-webkit-text-stroke:0.35px #fff;">aVal</div>
<div class="t" style="left:2494px;top:1026.24px;font-size:28px;color:#b4b4b4;font-weight:400;font-family:'Liberation Mono',monospace;-webkit-text-stroke:0.5px #b4b4b4;">b</div>
<div class="a" style="left:2494px;top:1061px;width:398px;height:76px;border:2px solid #121518;background:#2e333b"></div>
<div class="t" style="left:2515px;top:1084.60px;font-size:28px;color:#fff;font-weight:400;font-family:'Liberation Sans',sans-serif;-webkit-text-stroke:0.35px #fff;">bVal</div>
<div class="t" style="left:2494px;top:1245.54px;font-size:28px;color:#b4b4b4;font-weight:400;font-family:'Liberation Mono',monospace;-webkit-text-stroke:0.5px #b4b4b4;">a</div>
<div class="a" style="left:2494px;top:1281px;width:398px;height:76px;border:2px solid #121518;background:#2e333b"></div>
<div class="t" style="left:2515px;top:1304.30px;font-size:28px;color:#fff;font-weight:400;font-family:'Liberation Sans',sans-serif;-webkit-text-stroke:0.35px #fff;">secA</div>
<div class="t" style="left:2494px;top:1365.14px;font-size:28px;color:#b4b4b4;font-weight:400;font-family:'Liberation Mono',monospace;-webkit-text-stroke:0.5px #b4b4b4;">b</div>
<div class="a" style="left:112px;top:1389px;width:2880px;height:337px;background:#1f2428;"></div>
<div class="a" style="left:112px;top:1389px;width:2880px;height:3px;background:#000;"></div>
<div class="a" style="left:112px;top:1502px;width:2880px;height:6px;background:#000;"></div>
<div class="a" style="left:157px;top:1445px;width:26px;height:4px;background:#a6a7a9;border-radius:2px"></div>
<div class="a" style="left:210px;top:1441px;width:198px;height:12px;background:#36393e;border-radius:6px"></div>
<div class="a" style="left:208px;top:1431px;width:32px;height:32px;border-radius:50%;background:#fff"></div>
<div class="a" style="left:433px;top:1445px;width:26px;height:4px;background:#fff;border-radius:2px"></div>
<div class="a" style="left:444px;top:1434px;width:4px;height:26px;background:#fff;border-radius:2px"></div>
<div class="a" style="left:1045px;top:1408px;width:160px;height:78px;border:2px solid #15181b;background:#2e333b"></div>
<div class="t" style="left:1068px;top:1432.30px;font-size:28px;color:#fff;font-weight:400;font-family:'Liberation Sans',sans-serif;-webkit-text-stroke:0.35px #fff;">Fit</div>
<svg class="a" style="left:1163px;top:1442px" width="20" height="13" viewBox="0 0 20 13"><path d="M1,1 L19,1 L10,12 Z" fill="#fff" stroke="#fff" stroke-width="1.5" stroke-linejoin="round"/></svg>
<div class="a" style="left:1229px;top:1408px;width:160px;height:78px;border:2px solid #15181b;background:#2e333b"></div>
<div class="t" style="left:1252px;top:1432.30px;font-size:28px;color:#fff;font-weight:400;font-family:'Liberation Sans',sans-serif;-webkit-text-stroke:0.35px #fff;">1x</div>
<svg class="a" style="left:1347px;top:1442px" width="20" height="13" viewBox="0 0 20 13"><path d="M1,1 L19,1 L10,12 Z" fill="#fff" stroke="#fff" stroke-width="1.5" stroke-linejoin="round"/></svg>
<svg class="a" style="left:1444px;top:1434px" width="34" height="26" viewBox="0 0 34 26"><path d="M1.5,1.5 V24.5" stroke="#fff" stroke-width="3" stroke-linecap="round"/><path d="M3,13 L17,2 V24 Z M17,13 L32,2 V24 Z" fill="#fff" stroke="#fff" stroke-width="2" stroke-linejoin="round"/></svg>
<svg class="a" style="left:1504px;top:1432px" width="22" height="30" viewBox="0 0 22 30"><path d="M2.5,2 V28" stroke="#fff" stroke-width="4" stroke-linecap="round"/><path d="M5,15 L20,2.5 V27.5 Z" fill="#fff" stroke="#fff" stroke-width="2.5" stroke-linejoin="round"/></svg>
<svg class="a" style="left:1553px;top:1432px" width="28" height="30" viewBox="0 0 28 30"><path d="M3,3 Q3,1 5,2 L25.5,13.5 Q27,15 25.5,16.5 L5,28 Q3,29 3,27 Z" fill="#fff" stroke="#fff" stroke-width="2" stroke-linejoin="round"/></svg>
<svg class="a" style="left:1608px;top:1432px" width="22" height="30" viewBox="0 0 22 30"><path d="M19.5,2 V28" stroke="#fff" stroke-width="4" stroke-linecap="round"/><path d="M17,15 L2,2.5 V27.5 Z" fill="#fff" stroke="#fff" stroke-width="2.5" stroke-linejoin="round"/></svg>
<svg class="a" style="left:1687px;top:1429px" width="40" height="36" viewBox="0 0 40 36"><path d="M5,21 V18 Q5,10 13,10 H28" fill="none" stroke="#fff" stroke-width="3.4" stroke-linecap="round"/><path d="M26,3 L33,10 L26,17" fill="none" stroke="#fff" stroke-width="3.4" stroke-linecap="round" stroke-linejoin="round"/><path d="M35,15 V18 Q35,26 27,26 H12" fill="none" stroke="#fff" stroke-width="3.4" stroke-linecap="round"/><path d="M14,19 L7,26 L14,33" fill="none" stroke="#fff" stroke-width="3.4" stroke-linecap="round" stroke-linejoin="round"/></svg>
<svg class="a" style="left:1749px;top:1431px" width="32" height="32" viewBox="0 0 32 32"><rect x="0" y="0" width="32" height="32" rx="3" fill="#0b84f3"/><rect x="16" y="4" width="12" height="12" fill="#1f2428"/><rect x="4" y="16" width="12" height="12" fill="#1f2428"/></svg>
<svg class="a" style="left:1813px;top:1430px" width="16" height="34" viewBox="0 0 16 34"><path d="M13,2.5 H4.5 V31.5 H13" fill="none" stroke="#fff" stroke-width="4" stroke-linecap="round" stroke-linejoin="round"/></svg>
<svg class="a" style="left:1869px;top:1430px" width="16" height="34" viewBox="0 0 16 34"><path d="M3,2.5 H11.5 V31.5 H3" fill="none" stroke="#fff" stroke-width="4" stroke-linecap="round" stroke-linejoin="round"/></svg>
<svg class="a" style="left:1922px;top:1428px" width="40" height="38" viewBox="0 0 40 38"><path d="M1,13 Q1,11.5 2.5,11.5 H9 L19,3 Q21,2 21,4 V34 Q21,36 19,35 L9,26.5 H2.5 Q1,26.5 1,25 Z" fill="#fff"/><path d="M25.5,13 Q29,19 25.5,25" fill="none" stroke="#fff" stroke-width="3.2" stroke-linecap="round"/><path d="M30.5,5 Q38,19 30.5,34" fill="none" stroke="#fff" stroke-width="3.2" stroke-linecap="round"/></svg>
<svg class="a" style="left:2022px;top:1428px" width="38" height="38" viewBox="0 0 512 512"><path fill="#fff" d="M156.6 384.9L125.7 354c-8.5-8.5-11.5-20.8-7.7-32.2c3-8.9 7-20.5 11.8-33.8L24 288c-8.6 0-16.6-4.6-20.9-12.1s-4.2-16.7 .2-24.1l52.5-88.5c13-21.9 36.5-35.3 61.9-35.3l82.3 0c2.4-4 4.8-7.7 7.2-11.3C289.1-4.1 411.1-8.1 483.9 5.3c11.6 2.1 20.6 11.2 22.8 22.8c13.4 72.9 9.3 194.8-111.4 276.7c-3.5 2.4-7.3 4.8-11.3 7.2v82.3c0 25.4-13.4 49-35.3 61.9l-88.5 52.5c-7.4 4.4-16.6 4.5-24.1 .2s-12.1-12.2-12.1-20.9V380.8c-14.1 4.9-26.4 8.9-35.7 11.9c-11.2 3.6-23.4 .5-31.8-7.8zM384 168a40 40 0 1 0 0-80 40 40 0 1 0 0 80z"/></svg>
<div class="a" style="left:687px;top:1508px;width:6px;height:218px;background:#000;"></div>
<div class="a" style="left:693px;top:1508px;width:2299px;height:218px;background:#111;"></div>
<div class="t" style="left:180.4px;top:1520.03px;font-size:36px;color:#fff;font-weight:400;font-family:'Liberation Sans',sans-serif;-webkit-text-stroke:0.35px #fff;">00:01.19</div>
<div class="t" style="left:335.7px;top:1540.07px;font-size:20px;color:#c8c8c8;font-weight:400;font-family:'Liberation Sans',sans-serif;-webkit-text-stroke:0.35px #c8c8c8;">49 (30 fps)</div>
<div class="t" style="left:180.4px;top:1576.99px;font-size:26px;color:#fff;font-weight:400;font-family:'Liberation Sans',sans-serif;-webkit-text-stroke:0.35px #fff;">Untitled</div>
<div class="t" style="left:180.4px;top:1620.18px;font-size:24px;color:#a6a7a9;font-weight:400;font-family:'Liberation Sans',sans-serif;-webkit-text-stroke:0.35px #a6a7a9;">00:01.19 (49)</div>
<svg class="a" style="left:0;top:1508px" width="3104" height="32"><g fill="#3e3e3e"><rect x="725" y="0" width="2" height="30"/><rect x="740" y="0" width="2" height="4"/><rect x="755" y="0" width="2" height="10"/><rect x="770" y="0" width="2" height="4"/><rect x="785" y="0" width="2" height="10"/><rect x="800" y="0" width="2" height="4"/><rect x="815" y="0" width="2" height="10"/><rect x="830" y="0" width="2" height="4"/><rect x="845" y="0" width="2" height="10"/><rect x="860" y="0" width="2" height="4"/><rect x="875" y="0" width="2" height="10"/><rect x="890" y="0" width="2" height="4"/><rect x="905" y="0" width="2" height="10"/><rect x="920" y="0" width="2" height="4"/><rect x="935" y="0" width="2" height="10"/><rect x="950" y="0" width="2" height="4"/><rect x="965" y="0" width="2" height="10"/><rect x="980" y="0" width="2" height="4"/><rect x="995" y="0" width="2" height="10"/><rect x="1010" y="0" width="2" height="4"/><rect x="1025" y="0" width="2" height="10"/><rect x="1040" y="0" width="2" height="4"/><rect x="1055" y="0" width="2" height="10"/><rect x="1070" y="0" width="2" height="4"/><rect x="1085" y="0" width="2" height="10"/><rect x="1100" y="0" width="2" height="4"/><rect x="1115" y="0" width="2" height="10"/><rect x="1130" y="0" width="2" height="4"/><rect x="1145" y="0" width="2" height="10"/><rect x="1160" y="0" width="2" height="4"/><rect x="1175" y="0" width="2" height="30"/><rect x="1190" y="0" width="2" height="4"/><rect x="1205" y="0" width="2" height="10"/><rect x="1220" y="0" width="2" height="4"/><rect x="1235" y="0" width="2" height="10"/><rect x="1250" y="0" width="2" height="4"/><rect x="1265" y="0" width="2" height="10"/><rect x="1280" y="0" width="2" height="4"/><rect x="1295" y="0" width="2" height="10"/><rect x="1310" y="0" width="2" height="4"/><rect x="1325" y="0" width="2" height="10"/><rect x="1340" y="0" width="2" height="4"/><rect x="1355" y="0" width="2" height="10"/><rect x="1370" y="0" width="2" height="4"/><rect x="1385" y="0" width="2" height="10"/><rect x="1400" y="0" width="2" height="4"/><rect x="1415" y="0" width="2" height="10"/><rect x="1430" y="0" width="2" height="4"/><rect x="1445" y="0" width="2" height="10"/><rect x="1460" y="0" width="2" height="4"/><rect x="1475" y="0" width="2" height="10"/><rect x="1490" y="0" width="2" height="4"/><rect x="1505" y="0" width="2" height="10"/><rect x="1520" y="0" width="2" height="4"/><rect x="1535" y="0" width="2" height="10"/><rect x="1550" y="0" width="2" height="4"/><rect x="1565" y="0" width="2" height="10"/><rect x="1580" y="0" width="2" height="4"/><rect x="1595" y="0" width="2" height="10"/><rect x="1610" y="0" width="2" height="4"/><rect x="1625" y="0" width="2" height="30"/><rect x="1640" y="0" width="2" height="4"/><rect x="1655" y="0" width="2" height="10"/><rect x="1670" y="0" width="2" height="4"/><rect x="1685" y="0" width="2" height="10"/><rect x="1700" y="0" width="2" height="4"/><rect x="1715" y="0" width="2" height="10"/><rect x="1730" y="0" width="2" height="4"/><rect x="1745" y="0" width="2" height="10"/><rect x="1760" y="0" width="2" height="4"/><rect x="1775" y="0" width="2" height="10"/><rect x="1790" y="0" width="2" height="4"/><rect x="1805" y="0" width="2" height="10"/><rect x="1820" y="0" width="2" height="4"/><rect x="1835" y="0" width="2" height="10"/><rect x="1850" y="0" width="2" height="4"/><rect x="1865" y="0" width="2" height="10"/><rect x="1880" y="0" width="2" height="4"/><rect x="1895" y="0" width="2" height="10"/><rect x="1910" y="0" width="2" height="4"/><rect x="1925" y="0" width="2" height="10"/><rect x="1940" y="0" width="2" height="4"/><rect x="1955" y="0" width="2" height="10"/><rect x="1970" y="0" width="2" height="4"/><rect x="1985" y="0" width="2" height="10"/><rect x="2000" y="0" width="2" height="4"/><rect x="2015" y="0" width="2" height="10"/><rect x="2030" y="0" width="2" height="4"/><rect x="2045" y="0" width="2" height="10"/><rect x="2060" y="0" width="2" height="4"/><rect x="2075" y="0" width="2" height="30"/><rect x="2090" y="0" width="2" height="4"/><rect x="2105" y="0" width="2" height="10"/><rect x="2120" y="0" width="2" height="4"/><rect x="2135" y="0" width="2" height="10"/><rect x="2150" y="0" width="2" height="4"/><rect x="2165" y="0" width="2" height="10"/><rect x="2180" y="0" width="2" height="4"/><rect x="2195" y="0" width="2" height="10"/><rect x="2210" y="0" width="2" height="4"/><rect x="2225" y="0" width="2" height="10"/><rect x="2240" y="0" width="2" height="4"/><rect x="2255" y="0" width="2" height="10"/><rect x="2270" y="0" width="2" height="4"/><rect x="2285" y="0" width="2" height="10"/><rect x="2300" y="0" width="2" height="4"/><rect x="2315" y="0" width="2" height="10"/><rect x="2330" y="0" width="2" height="4"/><rect x="2345" y="0" width="2" height="10"/><rect x="2360" y="0" width="2" height="4"/><rect x="2375" y="0" width="2" height="10"/><rect x="2390" y="0" width="2" height="4"/><rect x="2405" y="0" width="2" height="10"/><rect x="2420" y="0" width="2" height="4"/><rect x="2435" y="0" width="2" height="10"/><rect x="2450" y="0" width="2" height="4"/><rect x="2465" y="0" width="2" height="10"/><rect x="2480" y="0" width="2" height="4"/><rect x="2495" y="0" width="2" height="10"/><rect x="2510" y="0" width="2" height="4"/><rect x="2525" y="0" width="2" height="30"/><rect x="2540" y="0" width="2" height="4"/><rect x="2555" y="0" width="2" height="10"/><rect x="2570" y="0" width="2" height="4"/><rect x="2585" y="0" width="2" height="10"/><rect x="2600" y="0" width="2" height="4"/><rect x="2615" y="0" width="2" height="10"/><rect x="2630" y="0" width="2" height="4"/><rect x="2645" y="0" width="2" height="10"/><rect x="2660" y="0" width="2" height="4"/><rect x="2675" y="0" width="2" height="10"/><rect x="2690" y="0" width="2" height="4"/><rect x="2705" y="0" width="2" height="10"/><rect x="2720" y="0" width="2" height="4"/><rect x="2735" y="0" width="2" height="10"/><rect x="2750" y="0" width="2" height="4"/><rect x="2765" y="0" width="2" height="10"/><rect x="2780" y="0" width="2" height="4"/><rect x="2795" y="0" width="2" height="10"/><rect x="2810" y="0" width="2" height="4"/><rect x="2825" y="0" width="2" height="10"/><rect x="2840" y="0" width="2" height="4"/><rect x="2855" y="0" width="2" height="10"/><rect x="2870" y="0" width="2" height="4"/><rect x="2885" y="0" width="2" height="10"/><rect x="2900" y="0" width="2" height="4"/><rect x="2915" y="0" width="2" height="10"/><rect x="2930" y="0" width="2" height="4"/><rect x="2945" y="0" width="2" height="10"/><rect x="2960" y="0" width="2" height="4"/></g></svg>
<div class="t" style="left:1191px;top:1527.88px;font-size:24px;color:#a6a7a9;font-weight:400;font-family:'Liberation Sans',sans-serif;-webkit-text-stroke:0.35px #a6a7a9;">00:01.00</div>
<div class="t" style="left:1641px;top:1527.88px;font-size:24px;color:#a6a7a9;font-weight:400;font-family:'Liberation Sans',sans-serif;-webkit-text-stroke:0.35px #a6a7a9;">00:02.00</div>
<div class="t" style="left:2091px;top:1527.88px;font-size:24px;color:#a6a7a9;font-weight:400;font-family:'Liberation Sans',sans-serif;-webkit-text-stroke:0.35px #a6a7a9;">00:03.00</div>
<div class="t" style="left:2541px;top:1527.88px;font-size:24px;color:#a6a7a9;font-weight:400;font-family:'Liberation Sans',sans-serif;-webkit-text-stroke:0.35px #a6a7a9;">00:04.00</div>
<div class="a" style="left:725px;top:1570px;width:2232px;height:80px;border-radius:8px;background:#0b84f3;border:2px solid #5aa6f6"></div>
<svg class="a" style="left:1443px;top:1508px" width="36" height="220" viewBox="0 0 36 220"><path d="M4,0 H32 Q35,0 35,3 V16 L18,30 L1,16 V3 Q1,0 4,0 Z" fill="#f02c00"/><rect x="17" y="20" width="2" height="200" fill="#f02c00"/></svg>
<div class="a" style="left:112px;top:76px;width:2880px;height:1650px;border-radius:20px;border:1px solid rgba(255,255,255,0.12)"></div>
</div>
</body></html>
